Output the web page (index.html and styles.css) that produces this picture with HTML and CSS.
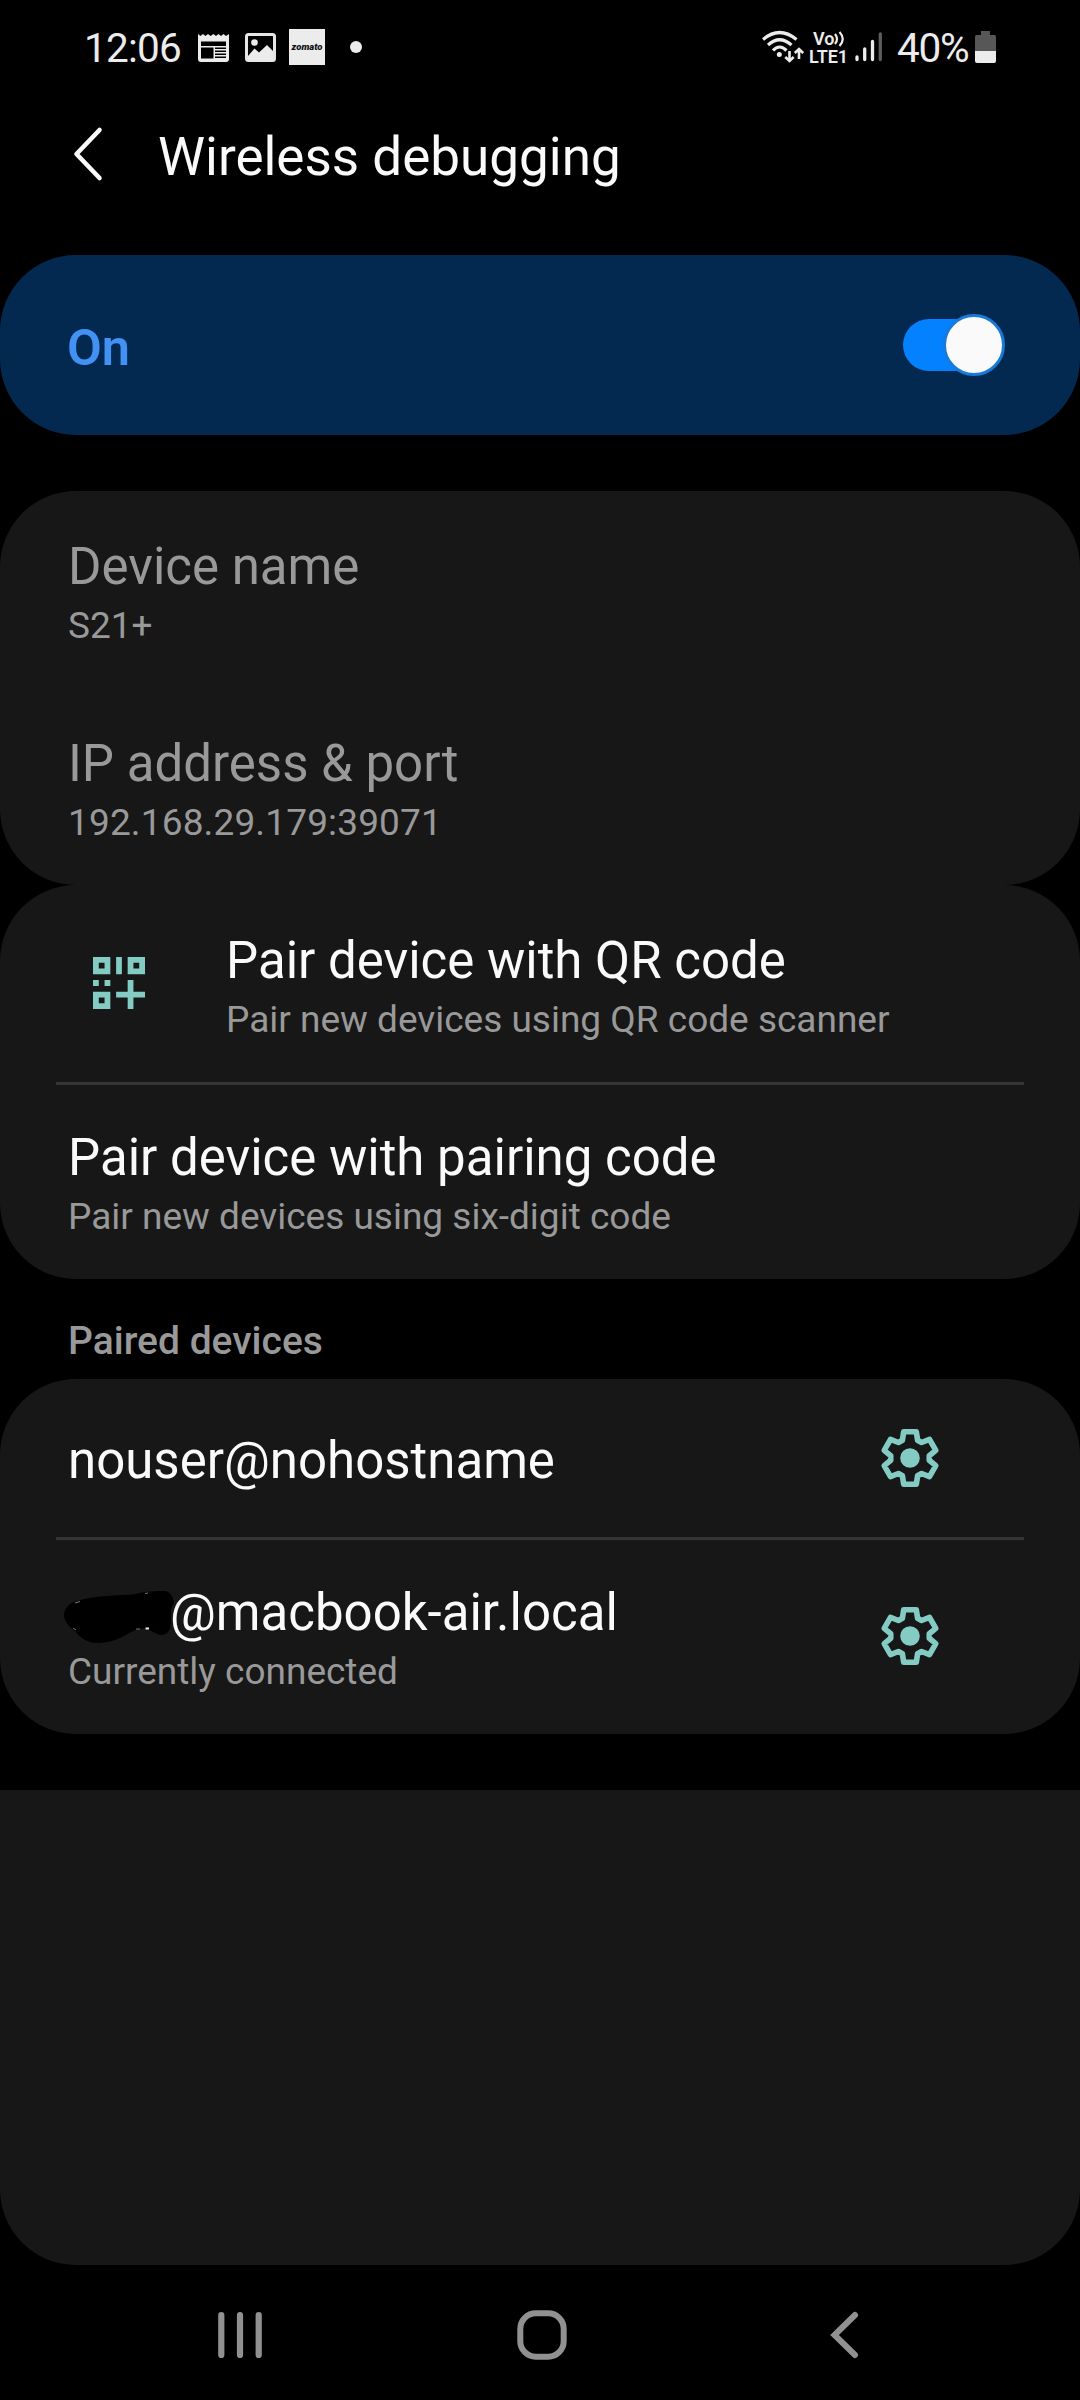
FILE: index.html
```html
<!DOCTYPE html>
<html lang="en">
<head>
<meta charset="utf-8">
<title>Wireless debugging</title>
<link rel="stylesheet" href="styles.css">
</head>
<body>
<svg class="defs" width="0" height="0">
  <symbol id="gear" viewBox="-30 -30 60 60">
    <path fill="none" stroke="currentColor" stroke-width="5.6" stroke-linejoin="round" d="M-6.3-26.2H6.3L7.6-17.8 11.6-15.5 19.5-18.6 25.8-7.6 19.25-2.3V2.3L25.8 7.6 19.5 18.6 11.6 15.5 7.6 17.8 6.3 26.2H-6.3L-7.6 17.8-11.6 15.5-19.5 18.6-25.8 7.6-19.25 2.3V-2.3L-25.8-7.6-19.5-18.6-11.6-15.5-7.6-17.8Z"/>
    <circle r="9.8" fill="currentColor"/>
  </symbol>
</svg>
<div class="screen">
  <header class="status">
    <div class="status-left">
      <span class="clock">12:06</span>
      <svg class="news" width="31" height="29" viewBox="0 0 31 29">
        <path fill="#ececec" fill-rule="evenodd" d="M0 1 2.5 3 5 1 7.5 3 10 1 12.5 3 15.500 1 18 3 20.500 1 23 3 25.500 1 28 3 31 1V26Q31 29 28 29H3Q0 29 0 26ZM3 8.500V13H28V8.500ZM3 14.500V25.500H15.500V14.500ZM17 14.500V16H28V14.500ZM17 17.500V19H28V17.500ZM17 20.500V22H28V20.500ZM17 23.500V25H28V23.500Z"/>
      </svg>
      <svg class="photo" width="31" height="29" viewBox="0 0 31 29">
        <rect x="1.500" y="1.500" width="28" height="26" rx="2" fill="none" stroke="#e6e6e6" stroke-width="3"/>
        <circle cx="9.500" cy="9.500" r="3.300" fill="#ececec"/>
        <path fill="#ececec" d="M3 23 9.500 15.500 14 19.500 22 12 28 18V27H3Z"/>
      </svg>
      <span class="zomato">zomato</span>
      <span class="dot"></span>
    </div>
    <div class="status-right">
      <svg width="42" height="34" viewBox="0 0 42 34">
        <g fill="none" stroke="#ececec" stroke-width="3.200">
          <path d="M1 9.500Q17.500-4.500 34.500 9.500"/>
          <path d="M6 15Q17.500 4.500 29.500 15"/>
          <path d="M11 20.500Q17.500 13.500 24.500 20.500"/>
          <path stroke-width="2.600" d="M27.500 21V31M23.300 27 27.500 31 31.700 27M37 29V19M32.800 23 37 19 41.200 23"/>
        </g>
        <circle cx="17.300" cy="24.500" r="2.500" fill="#ececec"/>
      </svg>
      <div class="lte">
        <span class="vo">Vo<svg width="11" height="18" viewBox="0 0 11 18"><path fill="none" stroke="#ececec" stroke-width="2.200" d="M1 4Q5 9 1 14M5.500 2Q12 9 5.500 16"/></svg></span>
        <span>LTE1</span>
      </div>
      <svg class="signal" width="28" height="30" viewBox="0 0 28 30">
        <path stroke="#ececec" stroke-width="3.300" stroke-linecap="round" d="M2 25V27.500M9.700 17V27.500M17.500 9.500V27.500"/>
        <path stroke="#5c5c5c" stroke-width="3.300" stroke-linecap="round" d="M25.300 2V27.500"/>
      </svg>
      <span class="percent">40%</span>
      <svg class="battery" width="21" height="32" viewBox="0 0 21 32">
        <path fill="#575757" d="M6 0H15V4H19.500Q21 4 21 6V20H0V6Q0 4 1.500 4H6Z"/>
        <path fill="#ececec" d="M0 20H21V30Q21 32 19 32H2Q0 32 0 30Z"/>
      </svg>
    </div>
  </header>

  <div class="appbar">
    <svg width="34" height="58" viewBox="0 0 34 58"><path fill="none" stroke="#fafafa" stroke-width="4.600" stroke-linecap="round" stroke-linejoin="round" d="M28.500 5 5.500 29 28.500 53"/></svg>
    <h1>Wireless debugging</h1>
  </div>

  <section class="master">
    <span>On</span>
    <div class="switch"><div class="thumb"></div></div>
  </section>

  <section class="card disabled">
    <div class="row"><div class="text"><h2>Device name</h2><p>S21+</p></div></div>
    <div class="row"><div class="text"><h2>IP address &amp; port</h2><p class="address">192.168.29.179:39071</p></div></div>
  </section>

  <section class="card">
    <div class="row">
      <svg class="qr" width="52" height="52" viewBox="0 0 9 9"><path fill="currentColor" fill-rule="evenodd" d="M0 0H3V3H0ZM1 1V2H2V1ZM4 0H5V3H4ZM6 0H9V3H6ZM7 1V2H8V1ZM0 4H1V5H0ZM2 4H3V5H2ZM0 6H3V9H0ZM1 7V8H2V7ZM6 4H7V6H9V7H7V9H6V7H4V6H6Z"/></svg>
      <div class="text"><h2>Pair device with QR code</h2><p>Pair new devices using QR code scanner</p></div>
    </div>
    <div class="row divided"><div class="text"><h2>Pair device with pairing code</h2><p>Pair new devices using six-digit code</p></div></div>
  </section>

  <h3 class="section-title">Paired devices</h3>

  <section class="card">
    <div class="row single"><div class="text"><h2>nouser@nohostname</h2></div><svg class="gear" width="60" height="60"><use href="#gear"/></svg></div>
    <div class="row divided">
      <div class="text">
        <h2 class="host"><svg class="scribble" width="112" height="56" viewBox="0 0 112 56"><path d="M0 27C0 18 7 13 14 12C30 6 56 7 72 5C82 2 92 2 101 2C107 3 109 8 110 14C106 19 107 24 107 30C107 38 106 45 98 46C92 46 88 41 82 40C74 38 68 43 60 47C50 52 42 54 34 54C24 54 16 49 12 43C6 38 1 34 0 27Z"/><path class="fleck" d="M11 14 16 12.500M9 39 12 41M72 40H76M81 4.500 84 4"/><path class="fleck bright" d="M81.500 39.500H85"/></svg><span>@macbook-air.local</span></h2>
        <p>Currently connected</p>
      </div>
      <svg class="gear" width="60" height="60"><use href="#gear"/></svg>
    </div>
  </section>

  <div class="filler"></div>

  <nav class="navbar">
    <svg width="46" height="52" viewBox="0 0 46 52"><path stroke="#919191" stroke-width="6.200" stroke-linecap="round" d="M4.300 6V46M23 6V46M41.700 6V46"/></svg>
    <svg class="home" width="52" height="52" viewBox="0 0 52 52"><rect x="4.300" y="4.300" width="43.400" height="43.400" rx="15.500" fill="none" stroke="#919191" stroke-width="6"/></svg>
    <svg width="34" height="52" viewBox="0 0 34 52"><path fill="none" stroke="#919191" stroke-width="6" stroke-linecap="round" d="M28 6 7.500 26 28 46"/></svg>
  </nav>
</div>
</body>
</html>
```
FILE: styles.css
```css
* { box-sizing: border-box; }
body { margin: 0; background: #000; font-family: Roboto, sans-serif; }
h1, h2, h3, p { margin: 0; font-weight: 400; white-space: nowrap; }
svg { display: block; flex: none; }
.defs { position: absolute; }
.screen { width: 1080px; height: 2400px; display: flex; flex-direction: column; background: #000; overflow: hidden; }

.status { height: 94px; flex: none; display: flex; justify-content: space-between; padding: 0 84px 0 84px; color: #ececec; }
.status-left, .status-right { display: flex; align-items: center; }
.clock { width: 114px; font-size: 40.5px; letter-spacing: -0.8px; line-height: 48px; padding-top: 2px; }
.photo { margin-left: 16px; }
.zomato { margin-left: 13px; width: 36px; height: 36px; background: #ececec; color: #111; font: italic 900 9.5px/36px Roboto, sans-serif; text-align: center; }
.dot { margin-left: 25px; width: 12px; height: 12px; border-radius: 50%; background: #ececec; }
.lte { margin-left: 5px; width: 40px; font-size: 18px; font-weight: 600; line-height: 17px; display: flex; flex-direction: column; white-space: nowrap; }
.vo { display: flex; padding-left: 4px; }
.signal { margin-left: 6px; }
.percent { margin-left: 14px; width: 78px; font-size: 40.5px; letter-spacing: -1.2px; line-height: 48px; padding-top: 2px; }

.appbar { height: 161px; flex: none; display: flex; align-items: flex-start; padding: 31px 0 0 71px; color: #fafafa; }
.appbar h1 { margin-left: 53px; padding-top: 1px; font-size: 53px; line-height: 62px; }

.master { height: 180px; flex: none; border-radius: 76px; background: #032950; display: flex; align-items: center; justify-content: space-between; padding: 0 76px 0 67px; color: #4291f5; font-size: 50.5px; font-weight: 600; }
.master span { padding-top: 5px; }
.switch { width: 101px; height: 52px; border-radius: 26px; background: #0381fe; display: flex; align-items: center; justify-content: flex-end; }
.thumb { flex: none; width: 62px; height: 62px; margin-right: -1px; border: 3px solid #1a7ad9; border-radius: 50%; background: #fafafa; }

.card { flex: none; border-radius: 76px; background: #171717; color: #fafafa; }
.master + .card { margin-top: 56px; }
.row { height: 197px; display: flex; align-items: center; padding: 0 140px 0 68px; position: relative; }
.text { flex: 1; padding-top: 8px; }
.text h2 { font-size: 51px; line-height: 60px; }
.text p { margin-top: 4px; font-size: 37px; line-height: 50px; color: #999; }
.text .address { letter-spacing: 0.15px; }
.disabled h2, .disabled p { color: #999; }
.row.single { height: 158px; }
.row.single .text { padding-top: 6px; }
.divided::before { content: ""; position: absolute; left: 56px; right: 56px; top: 0; height: 3px; background: #353535; }
.qr { margin: 0 81px 2px 25px; color: #84cbc4; }
.gear { color: #84cbc4; }
.section-title { height: 100px; flex: none; padding: 37px 0 0 68px; font-size: 39px; line-height: 50px; font-weight: 500; color: #999; }
.host { display: flex; }
.scribble { margin: 6px -6px -2px -4px; overflow: visible; }
.fleck { fill: none; stroke: #777; stroke-width: 1; }
.bright { stroke: #eee; stroke-width: 2; }
.filler { flex: 1; margin-top: 56px; background: #171717; border-radius: 0 0 76px 76px; }
.navbar { height: 135px; flex: none; display: flex; align-items: center; justify-content: space-between; padding: 5px 219px 0 217px; }
.home { margin-left: -6px; }
```
